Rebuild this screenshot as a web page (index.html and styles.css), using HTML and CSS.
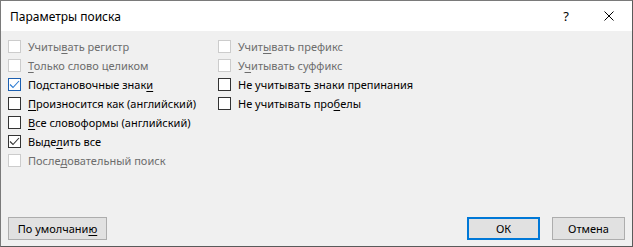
FILE: index.html
```html
<!DOCTYPE html>
<html lang="ru">
<head>
<meta charset="utf-8">
<link rel="stylesheet" href="styles.css">
</head>
<body>
<div class="dialog">
  <div class="titlebar">
    <span class="title">Параметры поиска</span>
    <span class="help">?</span>
    <span class="close"><svg width="10" height="10" viewBox="0 0 10 10"><path d="M0.5 0.5 L9.5 9.5 M9.5 0.5 L0.5 9.5" stroke="#000" stroke-width="1" fill="none"/></svg></span>
  </div>
  <div class="content">
    <div class="col col-left">
      <label class="opt disabled"><span class="box"></span><span>Учиты<u>в</u>ать регистр</span></label>
      <label class="opt disabled"><span class="box"></span><span><u>Т</u>олько слово целиком</span></label>
      <label class="opt hover"><span class="box"><svg width="11" height="11" viewBox="0 0 11 11"><path d="M1 5.5 L4 8.5 L10 2" stroke="#2a7ad2" stroke-width="1.1" fill="none"/></svg></span><span>Подстановочные знак<u>и</u></span></label>
      <label class="opt"><span class="box"></span><span><u>П</u>роизносится как (английский)</span></label>
      <label class="opt"><span class="box"></span><span><u>В</u>се словоформы (английский)</span></label>
      <label class="opt"><span class="box"><svg width="11" height="11" viewBox="0 0 11 11"><path d="M1 5.5 L4 8.5 L10 2" stroke="#333" stroke-width="1.1" fill="none"/></svg></span><span>Выде<u>л</u>ить все</span></label>
      <label class="opt disabled"><span class="box"></span><span>После<u>д</u>овательный поиск</span></label>
    </div>
    <div class="col col-right">
      <label class="opt disabled"><span class="box"></span><span>Учит<u>ы</u>вать префикс</span></label>
      <label class="opt disabled"><span class="box"></span><span>У<u>ч</u>итывать суффикс</span></label>
      <label class="opt"><span class="box"></span><span>Не учитыват<u>ь</u> знаки препинания</span></label>
      <label class="opt"><span class="box"></span><span>Не учитывать про<u>б</u>елы</span></label>
    </div>
  </div>
  <div class="footer">
    <button class="btn btn-default-settings">По умолчани<u>ю</u></button>
    <div class="spacer"></div>
    <button class="btn btn-ok">ОК</button>
    <button class="btn btn-cancel">Отмена</button>
  </div>
</div>
</body>
</html>
```
FILE: styles.css
```css
html, body {
  margin: 0;
  padding: 0;
}
body {
  font-family: "Noto Sans", "Liberation Sans", sans-serif;
  font-size: 11px;
  color: #000;
}
.dialog {
  box-sizing: border-box;
  width: 633px;
  height: 247px;
  border: 1px solid #7a7a7a;
  border-right-color: #5a5a5a;
  border-bottom-color: #5a5a5a;
  background: #f0f0f0;
  display: flex;
  flex-direction: column;
}
.titlebar {
  height: 30px;
  background: #fff;
  display: flex;
  align-items: center;
  padding-left: 9px;
}
.title {
  flex: 1;
  font-size: 12px;
}
.help {
  font-size: 13px;
  margin-right: 35px;
}
.close {
  display: flex;
  margin-right: 18px;
}
.content {
  display: flex;
  padding: 6px 0 0 7px;
  flex: 1;
}
.col {
  display: flex;
  flex-direction: column;
}
.col-left {
  width: 210px;
}
.opt {
  display: flex;
  align-items: center;
  height: 19px;
  gap: 7px;
  white-space: nowrap;
}
.box {
  box-sizing: border-box;
  width: 13px;
  height: 13px;
  border: 1px solid #333;
  background: #fff;
  display: flex;
  align-items: center;
  justify-content: center;
}
.opt.disabled {
  color: #6d6d6d;
}
.opt.disabled .box {
  border-color: #cccccc;
}
.opt.hover .box {
  border-color: #1c5fb0;
}
u {
  text-decoration-thickness: 1px;
  text-underline-offset: 2px;
}
.footer {
  display: flex;
  align-items: center;
  padding: 0 7px 6px 7px;
  gap: 12px;
}
.spacer {
  flex: 1;
}
.btn {
  box-sizing: border-box;
  height: 23px;
  font-family: inherit;
  font-size: 11px;
  background: #e1e1e1;
  border: 1px solid #adadad;
  padding: 0;
  color: #000;
}
.btn-default-settings {
  width: 99px;
}
.btn-ok {
  width: 73px;
  border: 2px solid #0078d7;
}
.btn-cancel {
  width: 73px;
}
```
